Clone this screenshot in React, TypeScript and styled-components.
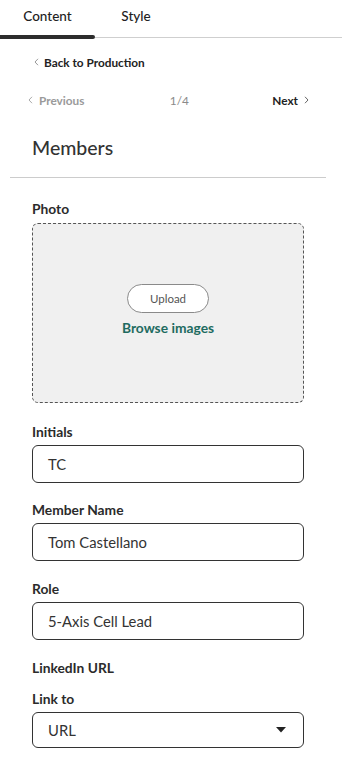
import React from "react";
import styled, { createGlobalStyle } from "styled-components";

const Global = createGlobalStyle`
  html, body { margin: 0; padding: 0; background: #ffffff; }
  body { font-family: "Lato", "Open Sans", sans-serif; color: #2b2b2b; }
  * { box-sizing: border-box; }
`;

const Page = styled.div`
  width: 342px;
  height: 759px;
  overflow: hidden;
  background: #fff;
`;

const TabBar = styled.div`
  display: flex;
  height: 38px;
  border-bottom: 1px solid #cfcfcf;
`;

const Tab = styled.div<{ $active?: boolean; $w: number }>`
  position: relative;
  width: ${(p) => p.$w}px;
  display: flex;
  align-items: flex-start;
  justify-content: center;
  padding-top: 8px;
  font-size: 13.5px;
  font-weight: 500;
  color: #222;
  &::after {
    content: "";
    display: ${(p) => (p.$active ? "block" : "none")};
    position: absolute;
    left: 0;
    right: 0;
    bottom: -2px;
    height: 4px;
    background: #2d2d2d;
    border-radius: 0 2px 2px 0;
  }
`;

const Body = styled.div`
  padding: 0 38px 0 32px;
  display: flex;
  flex-direction: column;
`;

const BackLink = styled.div`
  display: flex;
  align-items: center;
  gap: 5px;
  margin-top: 16px;
  padding-left: 2px;
  height: 16px;
  font-size: 11.8px;
  font-weight: 700;
  color: #222;
`;

const Pager = styled.div`
  display: flex;
  align-items: center;
  justify-content: space-between;
  margin-top: 22px;
  margin-left: -4px;
  margin-right: -5px;
  height: 16px;
  font-size: 11.8px;
`;

const PagerBtn = styled.span<{ $muted?: boolean }>`
  display: flex;
  align-items: center;
  gap: 6px;
  font-weight: 700;
  color: ${(p) => (p.$muted ? "#9a9a9a" : "#222")};
`;

const PageCount = styled.span`
  color: #8a8a8a;
  font-size: 11.8px;
  margin-left: 2px;
`;

const Title = styled.h2`
  margin: 28px 0 0 0;
  height: 24px;
  line-height: 24px;
  font-size: 19.5px;
  font-weight: 500;
  color: #333;
`;

const Divider = styled.hr`
  border: none;
  border-top: 1px solid #cccccc;
  margin: 17px 16px 0 10px;
`;

const Form = styled.div`
  padding: 0 38px 0 32px;
  display: flex;
  flex-direction: column;
`;

const Label = styled.div<{ $top: number }>`
  margin-top: ${(p) => p.$top}px;
  height: 16px;
  line-height: 16px;
  font-size: 13.8px;
  font-weight: 700;
  color: #2b2b2b;
`;

const Dropzone = styled.div`
  margin-top: 6px;
  height: 180px;
  border: 1px dashed #555;
  border-radius: 6px;
  background: #f0f0f0;
  display: flex;
  flex-direction: column;
  align-items: center;
  justify-content: center;
  padding-bottom: 6px;
`;

const UploadBtn = styled.button`
  width: 82px;
  height: 29px;
  border-radius: 15px;
  border: 1px solid #8a8a8a;
  background: #fff;
  font-family: inherit;
  font-size: 11.5px;
  color: #555;
  padding: 0;
`;

const Browse = styled.div`
  margin-top: 6px;
  font-size: 13.8px;
  font-weight: 700;
  color: #1e6b60;
`;

const Field = styled.div<{ $h?: number }>`
  margin-top: 5px;
  height: ${(p) => p.$h ?? 38}px;
  border: 1px solid #333;
  border-radius: 6px;
  display: flex;
  align-items: center;
  justify-content: space-between;
  padding: 0 17px 0 15px;
  font-size: 14.8px;
  color: #333;
`;

const Chevron = ({ dir, color }: { dir: "left" | "right"; color: string }) => (
  <svg width="5" height="8" viewBox="0 0 5 8">
    <path
      d={dir === "left" ? "M4 0.8 L1 4 L4 7.2" : "M1 0.8 L4 4 L1 7.2"}
      fill="none"
      stroke={color}
      strokeWidth="1"
    />
  </svg>
);

const Caret = () => (
  <svg width="10" height="6" viewBox="0 0 10 6">
    <path d="M0 0 H10 L5 5.5 Z" fill="#222" />
  </svg>
);

export default function App() {
  return (
    <Page>
      <Global />
      <TabBar>
        <Tab $active $w={95}>Content</Tab>
        <Tab $w={82}>Style</Tab>
      </TabBar>
      <Body>
        <BackLink>
          <Chevron dir="left" color="#999" />
          Back to Production
        </BackLink>
        <Pager>
          <PagerBtn $muted>
            <Chevron dir="left" color="#aaa" />
            Previous
          </PagerBtn>
          <PageCount>1/4</PageCount>
          <PagerBtn>
            Next
            <Chevron dir="right" color="#666" />
          </PagerBtn>
        </Pager>
        <Title>Members</Title>
      </Body>
      <Divider />
      <Form>
        <Label $top={23}>Photo</Label>
        <Dropzone>
          <UploadBtn>Upload</UploadBtn>
          <Browse>Browse images</Browse>
        </Dropzone>
        <Label $top={21}>Initials</Label>
        <Field>TC</Field>
        <Label $top={19}>Member Name</Label>
        <Field>Tom Castellano</Field>
        <Label $top={20}>Role</Label>
        <Field>5-Axis Cell Lead</Field>
        <Label $top={20}>LinkedIn URL</Label>
        <Label $top={15}>Link to</Label>
        <Field $h={36}>
          URL
          <Caret />
        </Field>
      </Form>
    </Page>
  );
}
